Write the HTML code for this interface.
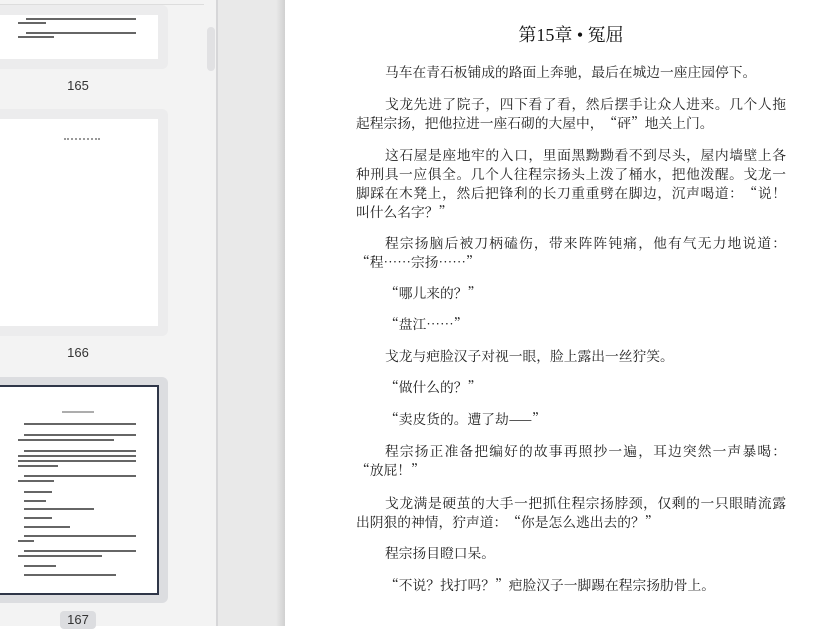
<!DOCTYPE html>
<html><head><meta charset="utf-8"><style>
*{margin:0;padding:0;box-sizing:border-box}
body{width:815px;height:626px;overflow:hidden;position:relative;background:#fff;font-family:"Noto Serif CJK SC","Liberation Serif",serif}
#side{position:absolute;left:0;top:0;width:216px;height:626px;background:#f3f3f3}
#sep{position:absolute;left:216px;top:0;width:2px;height:626px;background:#d6d6d8}
#gap{position:absolute;left:218px;top:0;width:67px;height:626px;background:linear-gradient(to right,#e9e9e9 0,#e9e9e9 58px,#d0d0d0 67px)}
.card{position:absolute;left:0;width:168px;background:#ececed;border-radius:0 6px 6px 0}
.pg{position:absolute;left:0;width:158px;background:#fff}
.num{position:absolute;width:156px;text-align:center;font:13px "Liberation Sans","DejaVu Sans",sans-serif;color:#333}
.b{position:absolute;height:2px;background:#333;opacity:.75}
#main{position:absolute;left:356px;top:0;width:430px;color:#1e1e1e}
h1{position:absolute;left:0;width:430px;top:21px;text-align:center;font-size:18px;font-weight:normal;color:#111;font-family:"Liberation Serif","Noto Serif CJK SC",serif}
p{position:absolute;left:0;width:430px;font-size:13.75px;line-height:19px;text-spacing-trim:space-all;white-space:nowrap}
p span{display:block;text-align:justify;text-align-last:justify}
p .i{padding-left:29px}
p .l{text-align-last:left}
</style></head><body>
<div id="side">
 <div style="position:absolute;left:0;top:4px;width:204px;height:1px;background:#ddd"></div>
 <div style="position:absolute;left:207px;top:27px;width:8px;height:44px;border-radius:4px;background:#e1e1e3"></div>
 <div class="card" style="top:5px;height:64px"><div class="pg" style="top:10px;height:44px">
  <div class="b" style="left:26px;top:3px;width:110px;height:1.5px"></div><div class="b" style="left:18px;top:7px;width:28px;height:1.5px"></div>
  <div class="b" style="left:26px;top:17px;width:110px;height:1.5px"></div><div class="b" style="left:18px;top:21px;width:36px;height:1.5px"></div></div></div>
 <div class="num" style="top:78px">165</div>
 <div class="card" style="top:109px;height:227px"><div class="pg" style="top:10px;height:207px">
  <div style="position:absolute;left:64px;top:19px;width:36px;height:2px;border-top:2px dotted #999"></div></div></div>
 <div class="num" style="top:345px">166</div>
 <div class="card" style="top:377px;height:226px;background:#dcdde0"><div class="pg" style="top:8px;height:210px;width:159px;border:2px solid #2f3648;border-left:none">
  <div class="b" style="left:62px;top:24px;width:32px;opacity:.4"></div>
  <div class="b" style="left:24px;top:36px;width:112px"></div>
  <div class="b" style="left:24px;top:47px;width:112px"></div><div class="b" style="left:18px;top:52px;width:96px"></div>
  <div class="b" style="left:24px;top:63px;width:112px"></div><div class="b" style="left:18px;top:68px;width:118px"></div><div class="b" style="left:18px;top:73px;width:118px"></div><div class="b" style="left:18px;top:78px;width:40px"></div>
  <div class="b" style="left:24px;top:88px;width:112px"></div><div class="b" style="left:18px;top:93px;width:36px"></div>
  <div class="b" style="left:24px;top:104px;width:28px"></div><div class="b" style="left:24px;top:113px;width:22px"></div>
  <div class="b" style="left:24px;top:121px;width:70px"></div><div class="b" style="left:24px;top:130px;width:28px"></div>
  <div class="b" style="left:24px;top:139px;width:46px"></div>
  <div class="b" style="left:24px;top:148px;width:112px"></div><div class="b" style="left:18px;top:153px;width:16px"></div>
  <div class="b" style="left:24px;top:163px;width:112px"></div><div class="b" style="left:18px;top:168px;width:84px"></div>
  <div class="b" style="left:24px;top:178px;width:32px"></div><div class="b" style="left:24px;top:187px;width:92px"></div>
 </div></div>
 <div style="position:absolute;left:60px;top:611px;width:36px;height:18px;border-radius:4px;background:#dcdde0"></div>
 <div class="num" style="top:612px">167</div>
</div>
<div id="sep"></div><div id="gap"></div>
<div id="main">
<h1>第15章 • 冤屈</h1>
<p style="top:62px"><span class="i l">马车在青石板铺成的路面上奔驰，最后在城边一座庄园停下。</span></p>
<p style="top:94px"><span class="i">戈龙先进了院子，四下看了看，然后摆手让众人进来。几个人拖</span><span class="l">起程宗扬，把他拉进一座石砌的大屋中，“砰”地关上门。</span></p>
<p style="top:145px"><span class="i">这石屋是座地牢的入口，里面黑黝黝看不到尽头，屋内墙壁上各</span><span>种刑具一应俱全。几个人往程宗扬头上泼了桶水，把他泼醒。戈龙一</span><span>脚踩在木凳上，然后把锋利的长刀重重劈在脚边，沉声喝道：“说！</span><span class="l">叫什么名字？”</span></p>
<p style="top:233px"><span class="i">程宗扬脑后被刀柄磕伤，带来阵阵钝痛，他有气无力地说道：</span><span class="l">“程……宗扬……”</span></p>
<p style="top:283px"><span class="i l">“哪儿来的？”</span></p>
<p style="top:314px"><span class="i l">“盘江……”</span></p>
<p style="top:346px"><span class="i l">戈龙与疤脸汉子对视一眼，脸上露出一丝狞笑。</span></p>
<p style="top:377px"><span class="i l">“做什么的？”</span></p>
<p style="top:409px"><span class="i l">“卖皮货的。遭了劫——”</span></p>
<p style="top:441px"><span class="i">程宗扬正准备把编好的故事再照抄一遍，耳边突然一声暴喝：</span><span class="l">“放屁！”</span></p>
<p style="top:493px"><span class="i">戈龙满是硬茧的大手一把抓住程宗扬脖颈，仅剩的一只眼睛流露</span><span class="l">出阴狠的神情，狞声道：“你是怎么逃出去的？”</span></p>
<p style="top:543px"><span class="i l">程宗扬目瞪口呆。</span></p>
<p style="top:575px"><span class="i l">“不说？找打吗？”疤脸汉子一脚踢在程宗扬肋骨上。</span></p>
</div>
</body></html>
